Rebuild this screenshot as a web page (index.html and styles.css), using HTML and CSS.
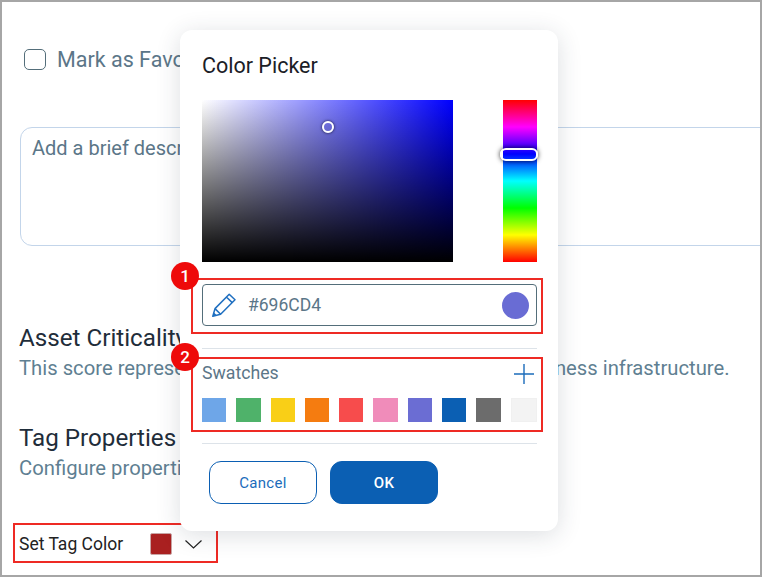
FILE: index.html
```html
<!DOCTYPE html>
<html lang="en">
<head>
<meta charset="utf-8">
<title>Color Picker</title>
<link rel="stylesheet" href="styles.css">
</head>
<body>
<div class="frame">
  <main class="page">
    <label class="favorite"><span class="checkbox"></span><span>Mark as Favorite</span></label>
    <div class="description">Add a brief description</div>
    <section class="criticality">
      <h2>Asset Criticality</h2>
      <p>This score represents the criticality of the asset to your business infrastructure.</p>
    </section>
    <section class="properties">
      <h2>Tag Properties</h2>
      <p>Configure properties of the tag</p>
    </section>
    <div class="tag-color">
      <span>Set Tag Color</span>
      <span class="tag-swatch"></span>
      <svg class="chevron" width="17" height="9" viewBox="0 0 17 9"><path d="M0.5 0.5 L8.5 8 L16.5 0.5" fill="none" stroke="#222" stroke-width="1.2"/></svg>
      <span class="highlight tag-highlight"></span>
    </div>
  </main>

  <div class="picker">
    <h1>Color Picker</h1>
    <div class="spectrum">
      <div class="area"><span class="cursor"></span></div>
      <div class="hue"><span class="hue-thumb"></span></div>
    </div>
    <div class="hex-section">
      <div class="hex-input">
        <svg class="pencil" width="24" height="24" viewBox="0 0 24 24"><path d="M0.8 23.2 L3 15.6 L17.2 1.2 L23 6.8 L8.6 21.2 Z M14.4 4 L20.2 9.6 M3 15.6 L8.6 21.2" fill="none" stroke="#1f6fc0" stroke-width="1.5" stroke-linejoin="round"/><path d="M0.8 23.2 L1.9 19.4 L4.8 22.2 Z" fill="#1f6fc0"/></svg>
        <span class="hex-value">#696CD4</span>
        <span class="hex-dot"></span>
      </div>
      <span class="highlight hex-highlight"></span>
      <span class="badge badge-one">1</span>
    </div>
    <hr class="rule rule-first">
    <div class="swatch-section">
      <div class="swatch-head">
        <span>Swatches</span>
        <svg width="20" height="20" viewBox="0 0 20 20"><path d="M10 0 V20 M0 10 H20" stroke="#1b6cbb" stroke-width="1.4" fill="none"/></svg>
      </div>
      <div class="swatches">
        <span class="swatch s1"></span><span class="swatch s2"></span><span class="swatch s3"></span><span class="swatch s4"></span><span class="swatch s5"></span><span class="swatch s6"></span><span class="swatch s7"></span><span class="swatch s8"></span><span class="swatch s9"></span><span class="swatch s10"></span>
      </div>
      <span class="highlight swatch-highlight"></span>
      <span class="badge badge-two">2</span>
    </div>
    <hr class="rule rule-second">
    <div class="actions">
      <button class="btn btn-cancel" type="button">Cancel</button>
      <button class="btn btn-ok" type="button">OK</button>
    </div>
  </div>
</div>
</body>
</html>
```

FILE: styles.css
```css
* { box-sizing: border-box; }
html, body { margin: 0; padding: 0; }
body { font-family: Roboto, "Liberation Sans", sans-serif; background: #fff; }

.frame {
  position: relative;
  width: 762px;
  height: 577px;
  border: 2px solid #a6a6a6;
  background: #fff;
  overflow: hidden;
}

.page { padding: 47px 0 0 17px; }

.favorite {
  display: flex;
  align-items: center;
  gap: 11px;
  margin-left: 5px;
  height: 21px;
  font-size: 21.5px;
  line-height: 21px;
  color: #5b7688;
}
.checkbox {
  width: 22px;
  height: 21px;
  border: 1px solid #546e7a;
  border-radius: 5px;
  background: #fff;
}

.description {
  margin: 57px 0 0 1px;
  width: 760px;
  height: 119px;
  padding: 8px 11px;
  border: 1px solid #c3d5ea;
  border-radius: 12px;
  font-size: 20px;
  line-height: 24px;
  color: #5b7688;
}

h2 {
  margin: 0;
  font-weight: 400;
  font-size: 24.2px;
  line-height: 28px;
  color: #1f2d3a;
}
.criticality p, .properties p {
  margin: 3px 0 0;
  font-size: 20.25px;
  line-height: 26px;
  color: #5f7f92;
  white-space: nowrap;
}
.criticality { margin-top: 78px; }
.properties { margin-top: 43px; }

.tag-color {
  position: relative;
  display: flex;
  align-items: center;
  height: 22px;
  margin-top: 52px;
  font-size: 17.5px;
  color: #222;
}
.tag-swatch {
  width: 22px;
  height: 22px;
  margin-left: 27px;
  background: #a92020;
  border: 1px solid #c9a5a5;
  border-radius: 2px;
}
.chevron { margin-left: 13px; }

.highlight {
  position: absolute;
  border: 2px solid #ee2a24;
  pointer-events: none;
}
.tag-highlight { left: -6px; top: -10px; width: 205px; height: 40px; }

.picker {
  position: absolute;
  left: 178px;
  top: 28px;
  width: 378px;
  height: 501px;
  padding: 22px 21px 0 22px;
  background: #fff;
  border-radius: 12px;
  box-shadow: 0 4px 24px rgba(40, 50, 70, 0.16);
}
.picker h1 {
  margin: 0;
  font-weight: 400;
  font-size: 21.5px;
  line-height: 27px;
  color: #1b2026;
}

.spectrum {
  display: flex;
  justify-content: space-between;
  margin-top: 21px;
  height: 162px;
}
.area {
  position: relative;
  width: 251px;
  background:
    linear-gradient(to bottom, rgba(0, 0, 0, 0), #000),
    linear-gradient(to right, #fff, #0000ff);
}
.cursor {
  position: absolute;
  left: 120px;
  top: 21px;
  width: 12px;
  height: 12px;
  border: 2.5px solid #fff;
  border-radius: 50%;
  box-shadow: 0 0 3px rgba(0, 0, 0, 0.8);
}
.hue {
  position: relative;
  width: 34px;
  background: linear-gradient(to bottom, #f00 0%, #f0f 16.67%, #00f 33.33%, #0ff 50%, #0f0 66.67%, #ff0 83.33%, #f00 100%);
}
.hue-thumb {
  position: absolute;
  left: -3px;
  top: 48px;
  width: 38px;
  height: 13px;
  border: 2.5px solid #fff;
  border-radius: 6px;
  box-shadow: 0 0 5px rgba(0, 0, 0, 0.8);
}

.hex-section { position: relative; margin-top: 22px; }
.hex-input {
  display: flex;
  align-items: center;
  height: 42px;
  padding: 0 7px 0 9px;
  border: 1px solid #546e7a;
  border-radius: 4px;
}
.pencil { flex: none; }
.hex-value {
  margin-left: 12px;
  font-size: 17.5px;
  color: #5b7688;
}
.hex-dot {
  width: 27px;
  height: 27px;
  margin-left: auto;
  border-radius: 50%;
  background: #696cd4;
}
.hex-highlight { left: -11px; top: -6px; width: 352px; height: 56px; }

.badge {
  position: absolute;
  left: -31px;
  width: 28px;
  height: 28px;
  border-radius: 50%;
  background: #ee0a0a;
  color: #fff;
  font-size: 17px;
  font-weight: 500;
  line-height: 28px;
  text-align: center;
}
.badge-one { top: -22px; }
.badge-two { top: -15px; }

.rule {
  margin: 0;
  border: 0;
  height: 1px;
  background: #dde3e9;
}
.rule-first { margin-top: 22px; }
.rule-second { margin-top: 10px; }

.swatch-section { position: relative; margin-top: 9px; height: 75px; }
.swatch-head {
  display: flex;
  align-items: flex-start;
  justify-content: space-between;
  padding: 3px 3px 0 0;
  height: 40px;
  font-size: 17.7px;
  line-height: 24px;
  color: #5b7688;
}
.swatch-head svg { margin-top: 3px; }
.swatches { display: flex; gap: 10px; height: 24px; }
.swatch { flex: 1; }
.s1 { background: #6ea6e8; }
.s2 { background: #4fb26a; }
.s3 { background: #f9cf17; }
.s4 { background: #f57c10; }
.s5 { background: #f74c4c; }
.s6 { background: #f08cba; }
.s7 { background: #6b6dd3; }
.s8 { background: #0b5fb3; }
.s9 { background: #6c6c6c; }
.s10 { background: #f3f3f3; border: 1px solid #f0f0f0; }
.swatch-highlight { left: -11px; top: -1px; width: 352px; height: 75px; }

.actions {
  display: flex;
  gap: 13px;
  margin: 17px 0 0 7px;
}
.btn {
  width: 108px;
  height: 43px;
  border-radius: 12px;
  font-family: inherit;
  font-size: 15px;
  letter-spacing: 0.3px;
}
.btn-cancel { background: #fff; border: 1px solid #0b5fb3; color: #1b6cbb; }
.btn-ok { background: #0b5fb3; border: 1px solid #0b5fb3; color: #fff; font-weight: 500; }
```
